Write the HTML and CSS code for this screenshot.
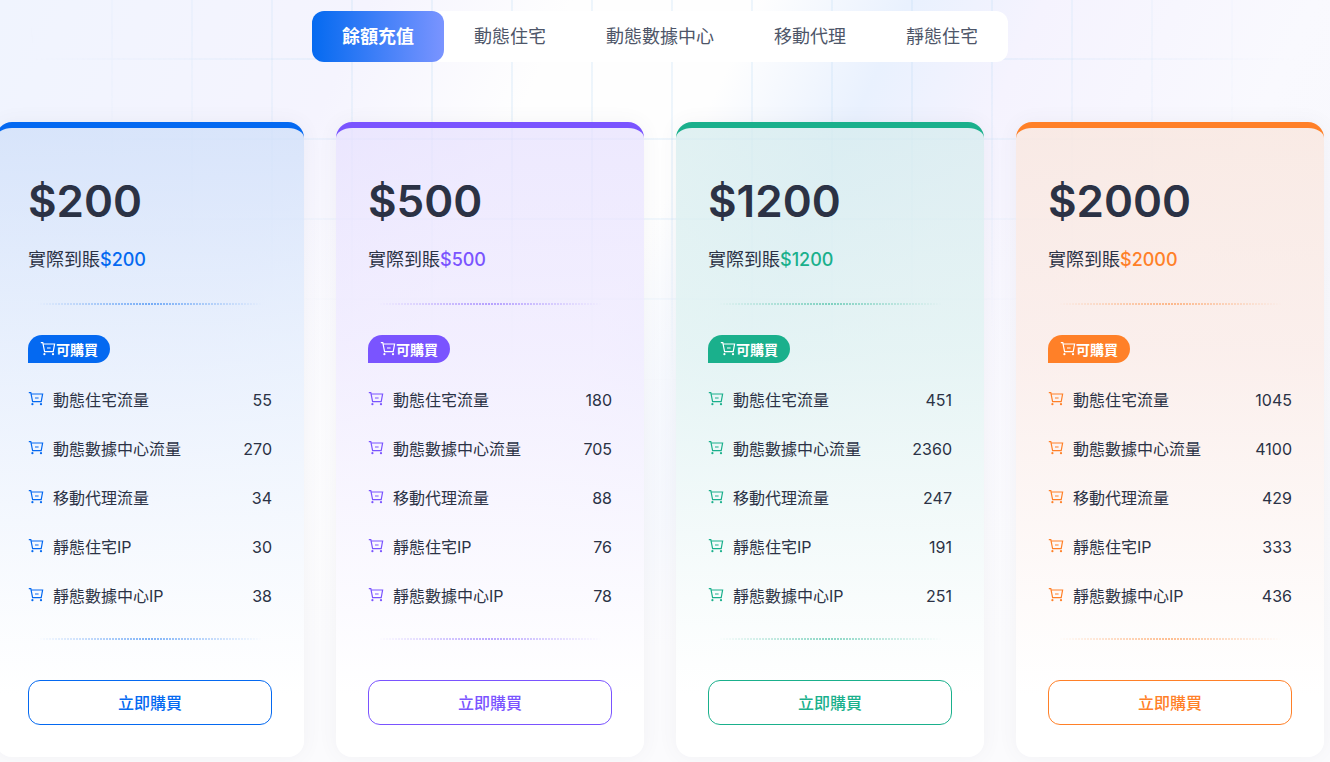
FILE: index.html
```
<!DOCTYPE html>
<html lang="zh-Hant">

<head>
    <meta charset="UTF-8">
    <meta name="viewport" content="width=device-width, initial-scale=1.0">
    <title>餘額充值</title>
    <link rel="stylesheet" href="styles.css">
</head>

<body>
    <!-- shared cart icon -->
    <svg class="sprite" aria-hidden="true">
        <symbol id="cart" viewBox="0 0 16 16">
            <path d="M0.8 1.6H2.8L4.6 10.6H13.2L14.6 3H3.2M7 7H10.6" fill="none" stroke="currentColor" stroke-width="1.2" />
            <circle cx="4.4" cy="13.2" r="1.1" fill="currentColor" />
            <circle cx="13" cy="13.2" r="1.1" fill="currentColor" />
        </symbol>
    </svg>

    <main class="page">
        <nav class="tabs">
            <button type="button" class="tab active">餘額充值</button>
            <button type="button" class="tab">動態住宅</button>
            <button type="button" class="tab">動態數據中心</button>
            <button type="button" class="tab">移動代理</button>
            <button type="button" class="tab">靜態住宅</button>
        </nav>

        <div class="cards" id="cards"></div>
    </main>

    <script src="script.js"></script>
</body>

</html>
```
FILE: styles.css
```
* {
    box-sizing: border-box;
}

body {
    margin: 0;
    font-family: Inter, "Noto Sans CJK TC", sans-serif;
    color: #2b3245;
    background:
        linear-gradient(180deg, transparent 25%, #fbfbfd 85%),
        linear-gradient(115deg, #f0f4fe 0%, #f5f4fe 22%, #fefefe 34%, #fefefe 45%, #e9f1fe 54%, #f5f3fe 62%, #f9f9fe 78%, #f6f6fb 100%);
    min-height: 100vh;
    overflow-x: hidden;
}

.sprite {
    display: none;
}

.page {
    position: relative;
    isolation: isolate;
    padding: 11px 10px 5px 0;
}

/* faint grid behind the cards */
.page::before {
    content: "";
    position: absolute;
    inset: 0;
    z-index: -1;
    background-image:
        linear-gradient(90deg, rgba(190, 220, 245, 0.25) 2px, transparent 2px),
        linear-gradient(rgba(190, 220, 245, 0.25) 2px, transparent 2px);
    background-size: 80px 80px;
    background-position: 31px 58px;
    mask-image: radial-gradient(ellipse 48% 50% at 50% 0, #000 50%, transparent 100%);
}

.tabs {
    display: flex;
    width: fit-content;
    margin: 0 auto 60px;
    background: #fff;
    border-radius: 12px;
}

.tab {
    padding: 0 30px;
    border: none;
    border-radius: 12px;
    background: none;
    font-family: inherit;
    font-size: 18px;
    line-height: 51px;
    color: #4e5669;
    cursor: pointer;
}

.tab.active {
    background: linear-gradient(90deg, #046af0, #7a94ff);
    color: #fff;
    font-weight: 700;
}

.cards {
    display: grid;
    grid-template-columns: repeat(4, 1fr);
    gap: 32px;
    margin: 0 -4px;
}

.card {
    padding: 40px 32px 32px;
    border-top: 6px solid var(--main);
    border-radius: 16px;
    background: linear-gradient(180deg, var(--tint) 0%, var(--tint-mid) 35%, #fff 90%);
    background-clip: padding-box;
    box-shadow: 0 0 20px rgba(80, 80, 110, 0.06);
}

.blue {
    --main: #0469f1;
    --tint: rgba(205, 222, 249, 0.7);
    --tint-mid: rgba(228, 238, 253, 0.75);
}

.purple {
    --main: #7a54ff;
    --tint: rgba(230, 224, 254, 0.7);
    --tint-mid: rgba(239, 234, 255, 0.75);
}

.green {
    --main: #1ab08c;
    --tint: rgba(214, 236, 238, 0.75);
    --tint-mid: rgba(225, 243, 242, 0.8);
}

.orange {
    --main: #ff8028;
    --tint: rgba(249, 231, 223, 0.8);
    --tint-mid: rgba(251, 237, 233, 0.85);
}

.price {
    margin: 0;
    font-size: 44px;
    font-weight: 600;
    line-height: 66px;
}

.credit {
    margin: 13px 0 30px;
    font-size: 18px;
    line-height: 26px;
}

.credit span {
    color: var(--main);
    font-weight: 500;
}

.divider {
    height: 2px;
    background: repeating-linear-gradient(90deg, var(--main) 0 2px, transparent 2px 3px);
    mask-image: linear-gradient(90deg, transparent 4%, rgba(0, 0, 0, 0.5) 50%, transparent 96%);
}

.badge {
    display: flex;
    align-items: center;
    width: fit-content;
    height: 28px;
    margin-top: 30px;
    padding: 0 12px;
    border-radius: 14px 14px 14px 0;
    background: var(--main);
    color: #fff;
    font-size: 14px;
    font-weight: 700;
}

.icon {
    width: 16px;
    height: 16px;
    flex: none;
}

.items {
    display: grid;
    gap: 24px;
    margin: 25px 0 29px;
    padding: 0;
    list-style: none;
    font-size: 16px;
    line-height: 25px;
}

.items li {
    display: flex;
}

.items .icon {
    margin: 3px 9px 0 0;
    color: var(--main);
}

.amount {
    margin-left: auto;
}

.buy {
    width: 100%;
    height: 45px;
    margin-top: 40px;
    padding: 0 0 2px;
    border: 1px solid var(--main);
    border-radius: 12px;
    background: #fff;
    color: var(--main);
    font-family: inherit;
    font-size: 16px;
    font-weight: 500;
    cursor: pointer;
}
```
FILE: script.js
```
const names = ["動態住宅流量", "動態數據中心流量", "移動代理流量", "靜態住宅IP", "靜態數據中心IP"];

const plans = [
    { color: "blue", price: 200, amounts: [55, 270, 34, 30, 38] },
    { color: "purple", price: 500, amounts: [180, 705, 88, 76, 78] },
    { color: "green", price: 1200, amounts: [451, 2360, 247, 191, 251] },
    { color: "orange", price: 2000, amounts: [1045, 4100, 429, 333, 436] }
];

const icon = '<svg class="icon" aria-hidden="true"><use href="#cart"></use></svg>';

document.getElementById("cards").innerHTML = plans.map(plan => `
    <section class="card ${plan.color}">
        <h2 class="price">$${plan.price}</h2>
        <p class="credit">實際到賬<span>$${plan.price}</span></p>
        <div class="divider"></div>
        <div class="badge">${icon}可購買</div>
        <ul class="items">
            ${names.map((name, i) => `<li>${icon}<span>${name}</span><span class="amount">${plan.amounts[i]}</span></li>`).join("")}
        </ul>
        <div class="divider"></div>
        <button type="button" class="buy">立即購買</button>
    </section>
`).join("");
```
